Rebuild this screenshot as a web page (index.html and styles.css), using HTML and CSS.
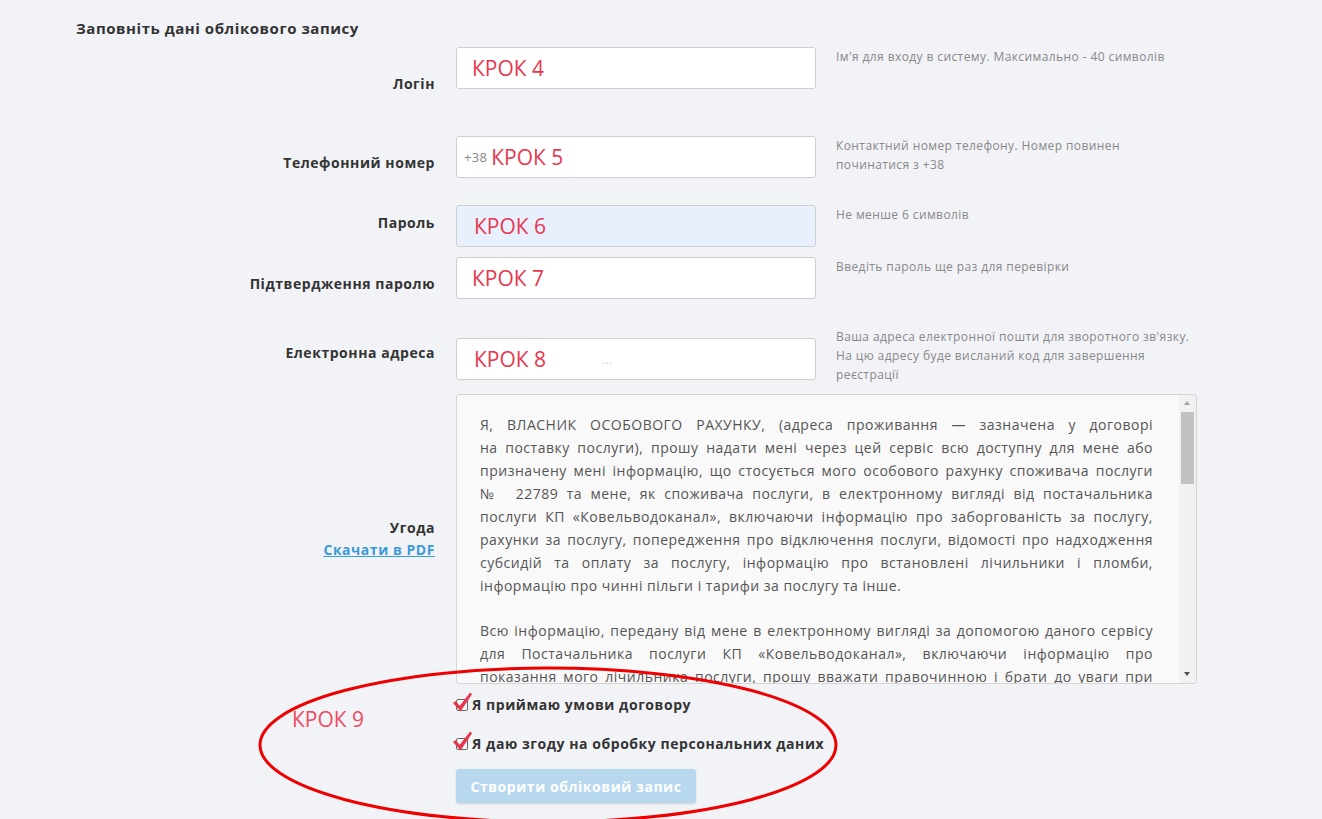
FILE: index.html
```html
<!DOCTYPE html>
<html lang="uk">
<head>
  <meta charset="UTF-8">
  <meta name="viewport" content="width=device-width, initial-scale=1.0">
  <title>Реєстрація</title>
  <link rel="stylesheet" href="styles.css">
</head>
<body>
  <div class="page">
    <h2 class="title">Заповніть дані облікового запису</h2>

    <div class="row row-login">
      <div class="label">Логін</div>
      <div class="field"><span class="step">КРОК 4</span></div>
      <div class="hint">Ім'я для входу в систему. Максимально - 40 символів</div>
    </div>

    <div class="row row-phone">
      <div class="label">Телефонний номер</div>
      <div class="field field-phone"><span class="prefix">+38</span><span class="step">КРОК 5</span></div>
      <div class="hint">Контактний номер телефону. Номер повинен починатися з +38</div>
    </div>

    <div class="row row-pass">
      <div class="label">Пароль</div>
      <div class="field field-filled field-shift"><span class="step">КРОК 6</span></div>
      <div class="hint">Не менше 6 символів</div>
    </div>

    <div class="row row-confirm">
      <div class="label">Підтвердження паролю</div>
      <div class="field"><span class="step">КРОК 7</span></div>
      <div class="hint">Введіть пароль ще раз для перевірки</div>
    </div>

    <div class="row row-email">
      <div class="label">Електронна адреса</div>
      <div class="field field-shift"><span class="step">КРОК 8</span><span class="dots">...</span></div>
      <div class="hint">Ваша адреса електронної пошти для зворотного зв'язку. На цю адресу буде висланий код для завершення реєстрації</div>
    </div>

    <div class="row row-terms">
      <div class="label">Угода<a href="#" class="pdf">Скачати в PDF</a></div>
      <div class="terms">
        <div class="terms-text">
          <p>Я, ВЛАСНИК ОСОБОВОГО РАХУНКУ, (адреса проживання — зазначена у договорі на&nbsp;поставку послуги), прошу надати мені через цей сервіс всю доступну для мене або призначену мені інформацію, що стосується мого особового рахунку споживача послуги №&nbsp; 22789 та мене, як споживача послуги, в електронному вигляді від постачальника послуги КП «Ковельводоканал», включаючи інформацію про заборгованість за послугу, рахунки за послугу, попередження про відключення послуги, відомості про надходження субсидій та оплату за послугу, інформацію про встановлені лічильники і пломби, інформацію про чинні пільги і тарифи за послугу та інше.</p>
          <p>Всю інформацію, передану від мене в електронному вигляді за допомогою даного сервісу для Постачальника послуги КП «Ковельводоканал», включаючи інформацію про показання&nbsp;мого лічильника послуги, прошу вважати правочинною і брати до уваги при здійсненні розрахунків за надані послуги.</p>
        </div>
        <div class="scrollbar">
          <span class="arrow arrow-up"></span>
          <span class="thumb"></span>
          <span class="arrow arrow-down"></span>
        </div>
      </div>
    </div>

    <div class="row row-actions">
      <div class="actions">
        <label class="check">
          <span class="box"></span>Я приймаю умови договору
          <svg class="tick" viewBox="0 0 22 22"><path d="M1 12 L4 10 L8 15 L19 1 L21 3 L9 21 Z"/></svg>
        </label>
        <label class="check">
          <span class="box"></span>Я даю згоду на обробку персональних даних
          <svg class="tick" viewBox="0 0 22 22"><path d="M1 12 L4 10 L8 15 L19 1 L21 3 L9 21 Z"/></svg>
        </label>
        <button class="submit" type="button">Створити обліковий запис</button>
      </div>
    </div>

    <div class="step step-9">КРОК 9</div>
    <svg class="ring" viewBox="0 0 600 154">
      <ellipse cx="298" cy="80" rx="288" ry="77" />
    </svg>
  </div>
</body>
</html>
```

FILE: styles.css
```css
html, body {
  margin: 0;
  overflow: hidden;
}
body {
  background-color: #f2f3f7;
  color: #333;
  font-family: 'Open Sans', 'Noto Sans', sans-serif;
  font-size: 14px;
  letter-spacing: 0.55px;
}
.page {
  position: relative;
  padding: 18px 0 0 76px;
  height: 801px;
}
.title {
  margin: 0;
  font-size: 15px;
  line-height: 20px;
  font-weight: bold;
}
.row {
  display: grid;
  grid-template-columns: 359px 360px 360px;
  column-gap: 21px;
  align-items: start;
}
.row .hint {
  margin-left: -1px;
  padding-right: 6px;
}
.label {
  text-align: right;
  font-weight: bold;
  line-height: 20px;
}
.field {
  display: flex;
  align-items: center;
  height: 42px;
  box-sizing: border-box;
  padding: 0 15px;
  background: #fff;
  border: 1px solid #cfcfcf;
  border-radius: 3px;
}
.field-filled {
  background: #e8f0fe;
}
.field-shift {
  padding-left: 17px;
}
.field-phone {
  padding-left: 7px;
}
.prefix {
  color: #888;
  font-size: 13px;
  letter-spacing: 0.3px;
  margin-right: 4px;
}
.dots {
  color: #c8c8c8;
  font-size: 11px;
  margin-left: 56px;
}
.step {
  color: #e8374f;
  font-size: 21px;
  line-height: 1;
  letter-spacing: 0;
}
.hint {
  color: #888;
  font-size: 12px;
  line-height: 19px;
  letter-spacing: 0.4px;
}

.row-login { margin-top: 9px; }
.row-login .label { padding-top: 27px; }
.row-phone { margin-top: 42px; }
.row-phone .label { padding-top: 17px; }
.row-pass { margin-top: 27px; }
.row-pass .label { padding-top: 8px; }
.row-confirm { margin-top: 10px; }
.row-confirm .label { padding-top: 17px; }
.row-email { margin-top: 28px; }
.row-email .label { padding-top: 16px; }
.row-email .field { margin-top: 11px; }
.row-terms { margin-top: 10px; }
.row-terms .label { padding-top: 124px; }

.pdf {
  display: block;
  margin-top: 2px;
  color: #3b9ad9;
}
.terms {
  grid-column: 2 / 4;
  display: flex;
  height: 290px;
  box-sizing: border-box;
  background: #f9f9f9;
  border: 1px solid #d4d4d4;
  border-radius: 3px;
  overflow: hidden;
}
.terms-text {
  flex: 1;
  padding: 18px 26px 0 23px;
  overflow: hidden;
  color: #555;
  line-height: 23px;
  letter-spacing: 0.5px;
  text-align: justify;
}
.terms-text p {
  margin: 0 0 22px;
}
.scrollbar {
  width: 17px;
  display: flex;
  flex-direction: column;
  align-items: center;
  background: #f1f1f1;
}
.arrow {
  height: 17px;
  width: 17px;
  position: relative;
}
.arrow::after {
  content: '';
  position: absolute;
  left: 5px;
  top: 6px;
  border-left: 3.5px solid transparent;
  border-right: 3.5px solid transparent;
}
.arrow-up::after {
  border-bottom: 4px solid #a3a3a3;
}
.arrow-down {
  margin-top: auto;
}
.arrow-down::after {
  border-top: 4px solid #505050;
}
.thumb {
  width: 13px;
  height: 72px;
  background: #c1c1c1;
}

.row-actions .actions {
  grid-column: 2 / 4;
  padding-top: 11px;
}
.check {
  position: relative;
  display: flex;
  align-items: center;
  font-weight: bold;
  line-height: 20px;
  margin-bottom: 19px;
}
.box {
  width: 10px;
  height: 10px;
  border: 1px solid #666;
  border-radius: 2px;
  background: #fff;
  margin-right: 4px;
}
.tick {
  position: absolute;
  left: -4px;
  top: -4px;
  width: 21px;
  height: 22px;
  fill: #e8374f;
}
.submit {
  display: block;
  margin-top: -4px;
  width: 240px;
  height: 34px;
  border: none;
  border-radius: 3px;
  background: #b8d8ee;
  color: #fff;
  font-family: inherit;
  font-size: 14px;
  font-weight: bold;
  letter-spacing: 0.55px;
  box-shadow: 0 1px 2px rgba(0, 0, 0, 0.15);
}

.step-9 {
  position: absolute;
  left: 292px;
  top: 709px;
  color: #ee4a60;
}
.ring {
  position: absolute;
  left: 250px;
  top: 665px;
  width: 600px;
  height: 154px;
  fill: none;
  stroke: #ee0000;
  stroke-width: 3;
}
```
